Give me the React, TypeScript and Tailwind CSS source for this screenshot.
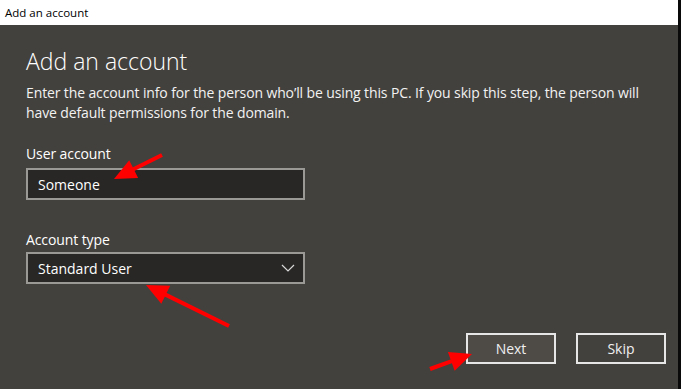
import React from "react";

const font = { fontFamily: '"Open Sans", "Noto Sans", sans-serif' };

function Arrow({ x1, y1, x2, y2 }: { x1: number; y1: number; x2: number; y2: number }) {
  const dx = x2 - x1;
  const dy = y2 - y1;
  const len = Math.sqrt(dx * dx + dy * dy);
  const ux = dx / len;
  const uy = dy / len;
  const headLen = 22;
  const headW = 10;
  const bx = x2 - ux * headLen;
  const by = y2 - uy * headLen;
  const px = -uy;
  const py = ux;
  return (
    <g>
      <line x1={x1} y1={y1} x2={bx + ux * 2} y2={by + uy * 2} stroke="#ff0000" strokeWidth={4} />
      <polygon
        points={`${x2},${y2} ${bx + px * headW},${by + py * headW} ${bx - px * headW},${by - py * headW}`}
        fill="#ff0000"
      />
    </g>
  );
}

export default function App() {
  return (
    <div className="relative flex h-[389px] w-[681px] overflow-hidden" style={font}>
      <div className="flex w-[678px] flex-col">
        <div className="flex h-[25px] items-center bg-white pl-[5px] text-[11.5px] text-black">
          Add an account
        </div>
        <div className="flex flex-1 flex-col bg-[#43413d] pl-[26px] text-white">
          <div className="mt-[20px] text-[23px] font-light leading-[32px] tracking-[0px]">Add an account</div>
          <div className="mt-[6px] w-[618px] text-[14px] leading-[20px] tracking-[-0.12px] text-[#f2f2f2]">
            Enter the account info for the person who’ll be using this PC. If you skip this step, the person will
            have default permissions for the domain.
          </div>
          <div className="mt-[21px] text-[14px] leading-[20px] tracking-[-0.1px]">User account</div>
          <div className="mt-[4px] flex h-[32px] w-[279px] items-center border-2 border-[#9a9996] bg-[#282725] pl-[10px] text-[14px]">
            Someone
          </div>
          <div className="mt-[30px] text-[14px] leading-[20px] tracking-[-0.1px]">Account type</div>
          <div className="mt-[2px] flex h-[32px] w-[279px] items-center justify-between border-2 border-[#9a9996] bg-[#282725] pl-[10px] pr-[8px] text-[14px]">
            <span>Standard User</span>
            <svg width="14" height="8" viewBox="0 0 14 8">
              <path d="M1 1 L7 7 L13 1" fill="none" stroke="#d8d8d8" strokeWidth="1.2" />
            </svg>
          </div>
          <div className="mt-[49px] flex justify-end gap-[20px] pr-[12px]">
            <div className="flex h-[31px] w-[90px] items-center justify-center border-2 border-[#e6e6e6] bg-[#4e4b47] text-[14px] text-[#f0f0f0]">
              Next
            </div>
            <div className="flex h-[31px] w-[90px] items-center justify-center border-2 border-[#e6e6e6] bg-[#43413d] text-[14px] text-[#f0f0f0]">
              Skip
            </div>
          </div>
        </div>
      </div>
      <div className="w-[3px] bg-[#0a0a0a]" />
      <svg className="pointer-events-none absolute left-0 top-0" width="681" height="389">
        <Arrow x1={162} y1={155} x2={114} y2={179} />
        <Arrow x1={229} y1={326} x2={146} y2={285} />
        <Arrow x1={430} y1={369} x2={472} y2={354} />
      </svg>
    </div>
  );
}
